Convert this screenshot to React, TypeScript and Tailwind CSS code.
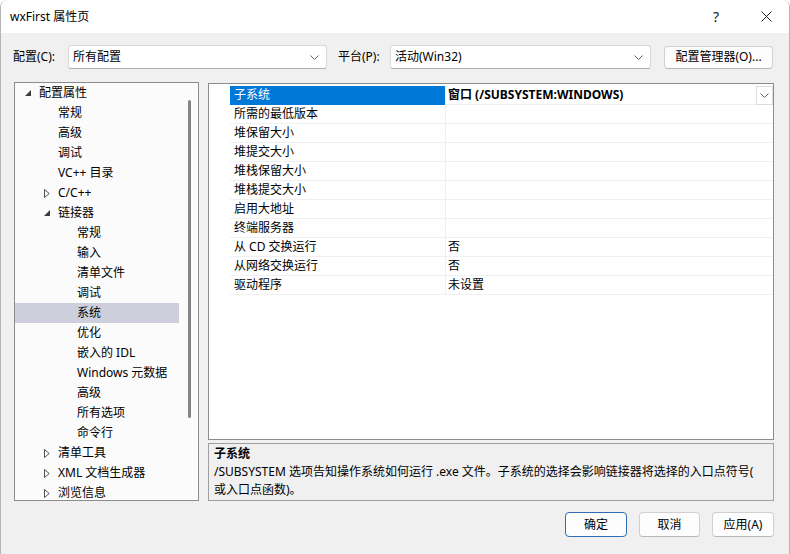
import React from "react";

const Chevron = ({ className = "" }: { className?: string }) => (
  <svg width="9" height="5" viewBox="0 0 9 5" className={className}>
    <path d="M0.5 0.5 L4.5 4.5 L8.5 0.5" fill="none" stroke="#606060" strokeWidth="1" />
  </svg>
);

const OpenArrow = () => (
  <svg width="6" height="6" viewBox="0 0 6 6">
    <path d="M6 0 L6 6 L0 6 Z" fill="#3c3c3c" />
  </svg>
);

const ClosedArrow = () => (
  <svg width="6" height="9" viewBox="0 0 6 9">
    <path d="M0.5 0.5 L5.2 4.5 L0.5 8.5 Z" fill="none" stroke="#505050" strokeWidth="1" />
  </svg>
);

type TreeItem = { t: string; l: number; a?: "open" | "closed"; sel?: boolean };

const tree: TreeItem[] = [
  { t: "配置属性", l: 0, a: "open" },
  { t: "常规", l: 1 },
  { t: "高级", l: 1 },
  { t: "调试", l: 1 },
  { t: "VC++ 目录", l: 1 },
  { t: "C/C++", l: 1, a: "closed" },
  { t: "链接器", l: 1, a: "open" },
  { t: "常规", l: 2 },
  { t: "输入", l: 2 },
  { t: "清单文件", l: 2 },
  { t: "调试", l: 2 },
  { t: "系统", l: 2, sel: true },
  { t: "优化", l: 2 },
  { t: "嵌入的 IDL", l: 2 },
  { t: "Windows 元数据", l: 2 },
  { t: "高级", l: 2 },
  { t: "所有选项", l: 2 },
  { t: "命令行", l: 2 },
  { t: "清单工具", l: 1, a: "closed" },
  { t: "XML 文档生成器", l: 1, a: "closed" },
  { t: "浏览信息", l: 1, a: "closed" },
];

const rows: [string, string][] = [
  ["子系统", "窗口 (/SUBSYSTEM:WINDOWS)"],
  ["所需的最低版本", ""],
  ["堆保留大小", ""],
  ["堆提交大小", ""],
  ["堆栈保留大小", ""],
  ["堆栈提交大小", ""],
  ["启用大地址", ""],
  ["终端服务器", ""],
  ["从 CD 交换运行", "否"],
  ["从网络交换运行", "否"],
  ["驱动程序", "未设置"],
];

const indent = ["pl-[5px]", "pl-[24px]", "pl-[43px]"];

export default function App() {
  return (
    <div className="w-[790px] h-[554px] bg-[#f0f0f0] flex flex-col overflow-hidden border-x border-[#b5b5b5] rounded-t-[7px] text-[12px] text-black font-['Noto_Sans','Noto_Sans_CJK_SC',sans-serif]">
      {/* Title bar */}
      <div className="h-[33px] bg-white flex items-center shrink-0">
        <div className="pl-[9px] flex-1 leading-none">wxFirst 属性页</div>
        <div className="w-[46px] flex justify-center text-[14px] text-[#202020] leading-none mr-[4px]">?</div>
        <div className="w-[46px] flex justify-center">
          <svg width="11" height="11" viewBox="0 0 11 11">
            <path d="M0.5 0.5 L10.5 10.5 M10.5 0.5 L0.5 10.5" stroke="#202020" strokeWidth="1" />
          </svg>
        </div>
      </div>

      {/* Config row */}
      <div className="mt-[12px] h-[24px] flex items-center shrink-0">
        <div className="ml-[12px] w-[55px]">配置(C):</div>
        <div className="w-[259px] h-[24px] bg-white border border-[#d9d9d9] border-b-[#b0b0b0] rounded-[3px] flex items-center pl-[4px] pr-[7px]">
          <span className="flex-1">所有配置</span>
          <Chevron />
        </div>
        <div className="ml-[11px] w-[52px]">平台(P):</div>
        <div className="w-[261px] h-[24px] bg-white border border-[#d9d9d9] border-b-[#b0b0b0] rounded-[3px] flex items-center pl-[4px] pr-[7px]">
          <span className="flex-1">活动(Win32)</span>
          <Chevron />
        </div>
        <div className="ml-[13px] w-[109px] h-[23px] bg-[#fdfdfd] border border-[#d0d0d0] border-b-[#b8b8b8] rounded-[4px] flex items-center justify-center">
          配置管理器(O)...
        </div>
      </div>

      {/* Main */}
      <div className="mt-[13px] flex h-[419px] shrink-0">
        {/* Tree */}
        <div className="ml-[13px] w-[185px] h-[419px] border border-[#8c8c8c] bg-[#fbfbfb] flex overflow-hidden">
          <div className="flex-1 flex flex-col">
            {tree.map((it, i) => (
              <div
                key={i}
                className={`h-[20px] shrink-0 flex items-center ${indent[it.l]} ${it.sel ? "bg-[#cdd0dc]" : ""}`}
              >
                <div className="w-[19px] h-[20px] flex items-center pl-[5px]">
                  {it.a === "open" ? <OpenArrow /> : it.a === "closed" ? <ClosedArrow /> : null}
                </div>
                <span className="whitespace-nowrap">{it.t}</span>
              </div>
            ))}
          </div>
          <div className="w-[19px] flex justify-center pt-[17px]">
            <div className="w-[3px] h-[318px] bg-[#858585] rounded-full ml-[1px]" />
          </div>
        </div>

        {/* Right side */}
        <div className="ml-[9px] w-[566px] flex flex-col">
          <div className="mt-[1px] h-[358px] border border-[#8c8c8c] bg-white pt-[2px] flex flex-col">
            {rows.map(([name, val], i) => {
              const sel = i === 0;
              return (
                <div key={i} className="h-[19px] flex shrink-0">
                  <div className="w-[21px] shrink-0" />
                  <div className={`w-[215px] shrink-0 flex items-center pl-[4px] border-b ${sel ? "bg-[#0078d7] text-white border-[#0078d7]" : "border-[#f0f0f0]"}`}>
                    {name}
                  </div>
                  <div className="w-[1px] bg-[#f0f0f0] shrink-0" />
                  <div className={`flex-1 flex items-center border-b border-[#f0f0f0] pl-[2px] ${sel ? "font-bold" : ""}`}>
                    <span className="flex-1 whitespace-nowrap">{val}</span>
                    {sel && (
                      <div className="w-[17px] h-[19px] border border-[#dcdcdc] bg-white flex items-center justify-center">
                        <Chevron />
                      </div>
                    )}
                  </div>
                </div>
              );
            })}
          </div>
          <div className="mt-[3px] h-[58px] border border-[#a0a0a0] bg-[#f0f0f0] pl-[5px] pt-[1px] leading-[18px]">
            <div className="font-bold">子系统</div>
            <div className="whitespace-nowrap">/SUBSYSTEM 选项告知操作系统如何运行 .exe 文件。子系统的选择会影响链接器将选择的入口点符号(</div>
            <div className="whitespace-nowrap">或入口点函数)。</div>
          </div>
        </div>
      </div>

      {/* Buttons */}
      <div className="mt-[11px] flex justify-end pr-[15px] gap-[12px] shrink-0">
        <div className="w-[62px] h-[25px] bg-[#fdfdfd] border border-[#2f6db5] rounded-[4px] flex items-center justify-center">确定</div>
        <div className="w-[61px] h-[25px] bg-[#fdfdfd] border border-[#d0d0d0] border-b-[#b8b8b8] rounded-[4px] flex items-center justify-center">取消</div>
        <div className="w-[62px] h-[25px] bg-[#fdfdfd] border border-[#d0d0d0] border-b-[#b8b8b8] rounded-[4px] flex items-center justify-center">应用(A)</div>
      </div>
    </div>
  );
}
